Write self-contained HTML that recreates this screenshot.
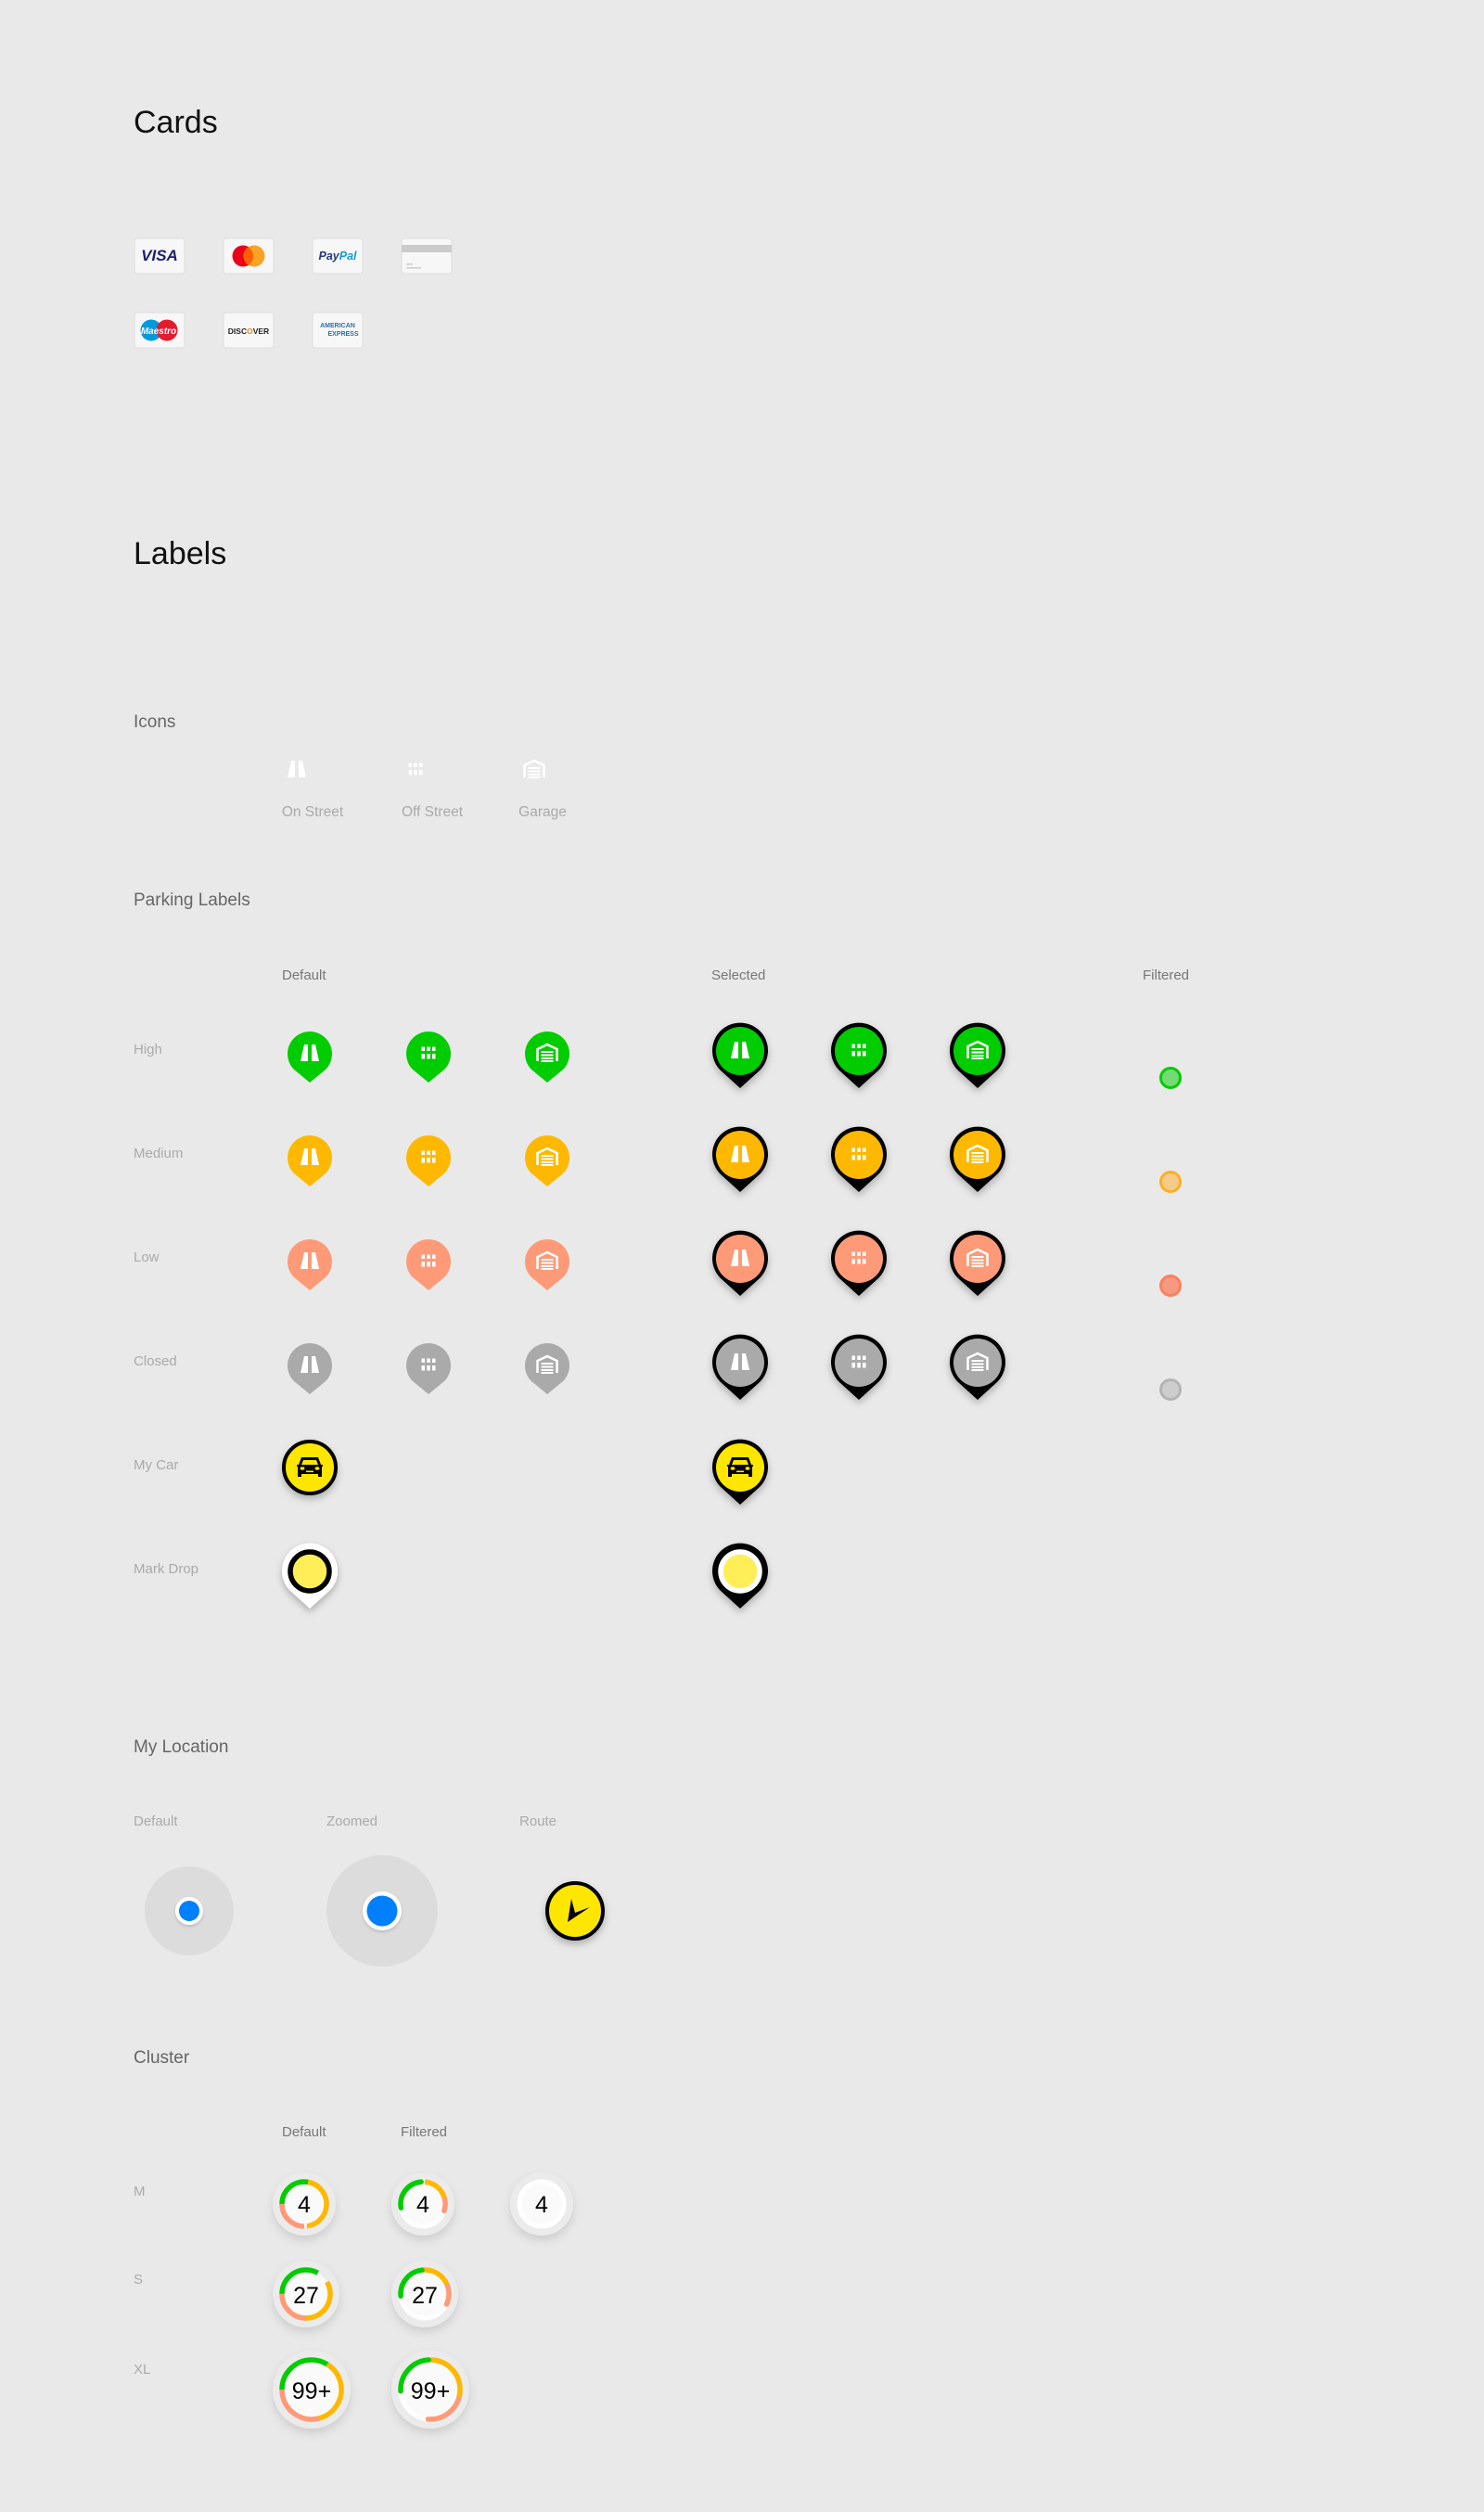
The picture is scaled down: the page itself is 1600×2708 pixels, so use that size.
<!DOCTYPE html>
<html><head><meta charset="utf-8"><style>
html,body{margin:0;padding:0;background:#e9e9e9;}
svg{display:block;font-family:"Liberation Sans",Arial,sans-serif;}
</style></head><body>
<svg width="1600" height="2708" viewBox="0 0 1600 2708" xmlns="http://www.w3.org/2000/svg">
<defs>
<filter id="sh" x="-50%" y="-50%" width="200%" height="200%"><feDropShadow dx="0" dy="4" stdDeviation="4" flood-color="#000" flood-opacity="0.25"/></filter>
<filter id="sh2" x="-50%" y="-50%" width="200%" height="200%"><feDropShadow dx="0" dy="2" stdDeviation="1.5" flood-color="#000" flood-opacity="0.15"/></filter>
<filter id="sh3" x="-50%" y="-50%" width="200%" height="200%"><feDropShadow dx="0" dy="5" stdDeviation="5" flood-color="#000" flood-opacity="0.12"/></filter>
<g id="ion"><path d="M-10,8 L-6,-10 L-2,-10 L-2,8 Z M2,-10 L6,-10 L10,8 L2,8 Z" fill="#fff"/></g>
<g id="ioff" fill="#fff"><rect x="-7.5" y="-7.5" width="3.5" height="4.5"/><rect x="-1.7" y="-7.5" width="3.5" height="4.5"/><rect x="4" y="-7.5" width="3.5" height="4.5"/><rect x="-7.5" y="0" width="3.5" height="5.5"/><rect x="-1.7" y="0" width="3.5" height="5.5"/><rect x="4" y="0" width="3.5" height="5.5"/></g>
<g id="igar" fill="none" stroke="#fff"><path d="M-10.5,8 L-10.5,-5 L0,-10 L10.5,-5 L10.5,8" stroke-width="2.5"/><path d="M-6.5,-2 H6.5 M-6.5,1.5 H6.5 M-6.5,5 H6.5 M-6.5,8 H6.5" stroke-width="2"/></g>
<path id="pd" d="M0,31 L-17,17 A24,24 0 1 1 17,17 Z"/>
<path id="ps" d="M0,40 L-21,21 A30,30 0 1 1 21,21 Z"/>
<g id="car"><path d="M-9,-11 L9,-11 L12,-3 L14,-3 L14,-1 L13,-1 L13,10 L9,10 L9,7 L-9,7 L-9,10 L-13,10 L-13,-1 L-14,-1 L-14,-3 L-12,-3 Z" fill="#000"/><path d="M-7,-8 L7,-8 L9,-3 L-9,-3 Z" fill="#ffe600"/><ellipse cx="-8" cy="1" rx="2.5" ry="1.8" fill="#ffe600"/><ellipse cx="8" cy="1" rx="2.5" ry="1.8" fill="#ffe600"/><rect x="-4" y="3.5" width="8" height="1.6" fill="#ffe600"/></g>
</defs>

<text x="144" y="143" font-size="34" fill="#111">Cards</text>
<text x="144" y="608" font-size="34" fill="#111">Labels</text>

<g stroke="#dedede" stroke-width="1" fill="#f7f7f7">
<rect x="145" y="257" width="54" height="38" rx="3"/><rect x="241" y="257" width="54" height="38" rx="3"/><rect x="337" y="257" width="54" height="38" rx="3"/><rect x="433" y="257" width="54" height="38" rx="3"/>
<rect x="145" y="337" width="54" height="38" rx="3"/><rect x="241" y="337" width="54" height="38" rx="3"/><rect x="337" y="337" width="54" height="38" rx="3"/>
</g>
<text x="172" y="281" font-size="17" font-weight="bold" font-style="italic" fill="#1a1f71" text-anchor="middle">VISA</text>
<circle cx="262" cy="276" r="11.5" fill="#eb001b"/><circle cx="274" cy="276" r="11.5" fill="#f79e1b" fill-opacity="0.95"/>
<path d="M268,266.5 A11.5,11.5 0 0 1 268,285.5 A11.5,11.5 0 0 1 268,266.5Z" fill="#ff5f00"/>
<text x="364" y="280" font-size="12.5" font-weight="bold" font-style="italic" text-anchor="middle"><tspan fill="#253b80">Pay</tspan><tspan fill="#179bd7">Pal</tspan></text>
<rect x="433" y="264" width="54" height="8" fill="#cbcbcb"/>
<rect x="438" y="284" width="7" height="1.5" fill="#ccc"/><rect x="438" y="288" width="16" height="1.5" fill="#ccc"/>
<circle cx="163" cy="356" r="11.5" fill="#0099df"/><circle cx="180" cy="356" r="11.5" fill="#e41b2c"/>
<text x="171" y="360" font-size="10" font-weight="bold" font-style="italic" fill="#fff" text-anchor="middle">Maestro</text>
<text x="268" y="360" font-size="8.5" font-weight="bold" fill="#222" text-anchor="middle">DISC<tspan fill="#f58220">O</tspan>VER</text>
<text x="364" y="353" font-size="7" font-weight="bold" fill="#2671b9" text-anchor="middle">AMERICAN</text>
<text x="370" y="362" font-size="7" font-weight="bold" fill="#2671b9" text-anchor="middle">EXPRESS</text>

<text x="144" y="784" font-size="19" fill="#666">Icons</text>
<use href="#ion" x="320" y="830"/><use href="#ioff" x="448" y="830"/><use href="#igar" x="576" y="830"/>
<g font-size="15.5" fill="#aaa" text-anchor="middle"><text x="337" y="880">On Street</text><text x="466" y="880">Off Street</text><text x="585" y="880">Garage</text></g>

<text x="144" y="976" font-size="19" fill="#666">Parking Labels</text>
<g font-size="15" fill="#777"><text x="304" y="1056">Default</text><text x="767" y="1056">Selected</text><text x="1232" y="1056">Filtered</text></g>
<g font-size="15" fill="#aaa"><text x="144" y="1136">High</text><text x="144" y="1248">Medium</text><text x="144" y="1360">Low</text><text x="144" y="1472">Closed</text><text x="144" y="1584">My Car</text><text x="144" y="1696">Mark Drop</text></g>

<g fill="#00cc00"><use href="#pd" x="334" y="1136"/><use href="#pd" x="462" y="1136"/><use href="#pd" x="590" y="1136"/></g>
<g fill="#ffb800"><use href="#pd" x="334" y="1248"/><use href="#pd" x="462" y="1248"/><use href="#pd" x="590" y="1248"/></g>
<g fill="#ff9a78"><use href="#pd" x="334" y="1360"/><use href="#pd" x="462" y="1360"/><use href="#pd" x="590" y="1360"/></g>
<g fill="#aaaaaa"><use href="#pd" x="334" y="1472"/><use href="#pd" x="462" y="1472"/><use href="#pd" x="590" y="1472"/></g>
<g>
<use href="#ion" x="334" y="1136"/><use href="#ioff" x="462" y="1136"/><use href="#igar" x="590" y="1136"/>
<use href="#ion" x="334" y="1248"/><use href="#ioff" x="462" y="1248"/><use href="#igar" x="590" y="1248"/>
<use href="#ion" x="334" y="1360"/><use href="#ioff" x="462" y="1360"/><use href="#igar" x="590" y="1360"/>
<use href="#ion" x="334" y="1472"/><use href="#ioff" x="462" y="1472"/><use href="#igar" x="590" y="1472"/>
</g>

<g filter="url(#sh)" fill="#000">
<use href="#ps" x="798" y="1133"/><use href="#ps" x="926" y="1133"/><use href="#ps" x="1054" y="1133"/>
<use href="#ps" x="798" y="1245"/><use href="#ps" x="926" y="1245"/><use href="#ps" x="1054" y="1245"/>
<use href="#ps" x="798" y="1357"/><use href="#ps" x="926" y="1357"/><use href="#ps" x="1054" y="1357"/>
<use href="#ps" x="798" y="1469"/><use href="#ps" x="926" y="1469"/><use href="#ps" x="1054" y="1469"/>
<use href="#ps" x="798" y="1582"/><use href="#ps" x="798" y="1694"/>
</g>
<g fill="#00cc00"><circle cx="798" cy="1133" r="26"/><circle cx="926" cy="1133" r="26"/><circle cx="1054" cy="1133" r="26"/></g>
<g fill="#ffb800"><circle cx="798" cy="1245" r="26"/><circle cx="926" cy="1245" r="26"/><circle cx="1054" cy="1245" r="26"/></g>
<g fill="#ff9a78"><circle cx="798" cy="1357" r="26"/><circle cx="926" cy="1357" r="26"/><circle cx="1054" cy="1357" r="26"/></g>
<g fill="#aaaaaa"><circle cx="798" cy="1469" r="26"/><circle cx="926" cy="1469" r="26"/><circle cx="1054" cy="1469" r="26"/></g>
<g>
<use href="#ion" x="798" y="1133"/><use href="#ioff" x="926" y="1133"/><use href="#igar" x="1054" y="1133"/>
<use href="#ion" x="798" y="1245"/><use href="#ioff" x="926" y="1245"/><use href="#igar" x="1054" y="1245"/>
<use href="#ion" x="798" y="1357"/><use href="#ioff" x="926" y="1357"/><use href="#igar" x="1054" y="1357"/>
<use href="#ion" x="798" y="1469"/><use href="#ioff" x="926" y="1469"/><use href="#igar" x="1054" y="1469"/>
</g>

<circle cx="1262" cy="1162" r="10.5" fill="#72db72" stroke="#00cc00" stroke-width="3"/>
<circle cx="1262" cy="1274" r="10.5" fill="#f5cb8a" stroke="#ffb020" stroke-width="3"/>
<circle cx="1262" cy="1386" r="10.5" fill="#f59a80" stroke="#ff7f5e" stroke-width="3"/>
<circle cx="1262" cy="1498" r="10.5" fill="#cdcdcd" stroke="#b4b4b4" stroke-width="3"/>

<circle cx="334" cy="1582" r="28" fill="#ffe600" stroke="#000" stroke-width="4" filter="url(#sh)"/>
<use href="#car" x="334" y="1582"/>
<circle cx="798" cy="1582" r="26" fill="#ffe600"/>
<use href="#car" x="798" y="1582"/>

<use href="#ps" x="334" y="1694" fill="#fff" filter="url(#sh)"/>
<circle cx="334" cy="1694" r="21" fill="#ffee58" stroke="#000" stroke-width="5.5"/>
<circle cx="798" cy="1694" r="21" fill="#ffee58" stroke="#fff" stroke-width="5.5"/>

<text x="144" y="1889" font-size="19" fill="#666">My Location</text>
<g font-size="15" fill="#aaa"><text x="144" y="1968">Default</text><text x="352" y="1968">Zoomed</text><text x="560" y="1968">Route</text></g>
<circle cx="204" cy="2060" r="48" fill="#dcdcdc"/>
<circle cx="204" cy="2060" r="15" fill="#fff" filter="url(#sh2)"/><circle cx="204" cy="2060" r="11" fill="#007fff"/>
<circle cx="412" cy="2060" r="60" fill="#dcdcdc"/>
<circle cx="412" cy="2060" r="21" fill="#fff" filter="url(#sh2)"/><circle cx="412" cy="2060" r="16.5" fill="#007fff"/>
<circle cx="620" cy="2060" r="30" fill="#ffe600" stroke="#000" stroke-width="4" filter="url(#sh)"/>
<path d="M616,2047 L620,2062 L636,2056 L612,2072 Z" fill="#000"/>

<text x="144" y="2224" font-size="19" fill="#666">Cluster</text>
<g font-size="15" fill="#777"><text x="304" y="2303">Default</text><text x="432" y="2303">Filtered</text></g>
<g font-size="15" fill="#aaa"><text x="144" y="2367">M</text><text x="144" y="2462">S</text><text x="144" y="2559">XL</text></g>

<g filter="url(#sh3)" fill="#ebebeb">
<circle cx="328" cy="2376" r="34"/><circle cx="456" cy="2376" r="34"/><circle cx="584" cy="2376" r="34"/>
<circle cx="330" cy="2473" r="36"/><circle cx="458" cy="2473" r="36"/>
<circle cx="336" cy="2576" r="42"/><circle cx="464" cy="2576" r="42"/>
</g>
<g fill="#fafafa">
<circle cx="328" cy="2376" r="24"/><circle cx="456" cy="2376" r="24"/><circle cx="584" cy="2376" r="24"/>
<circle cx="330" cy="2473" r="26"/><circle cx="458" cy="2473" r="26"/>
<circle cx="336" cy="2576" r="32"/><circle cx="464" cy="2576" r="32"/>
</g>
<g fill="none" stroke-width="5.5">
<circle cx="328" cy="2376" r="24" stroke="#00cc00" stroke-dasharray="41.9 200" transform="rotate(180 328 2376)"/>
<circle cx="328" cy="2376" r="24" stroke="#ffb800" stroke-dasharray="68.1 200" transform="rotate(280 328 2376)"/>
<circle cx="328" cy="2376" r="24" stroke="#ff9a78" stroke-dasharray="37.7 200" transform="rotate(90 328 2376)"/>
<circle cx="456" cy="2376" r="24" stroke="#fff" stroke-width="5"/>
<circle cx="456" cy="2376" r="24" stroke="#ff9a78" stroke-linecap="round" stroke-dasharray="20 200" transform="rotate(-30 456 2376)"/>
<circle cx="456" cy="2376" r="24" stroke="#ffb800" stroke-dasharray="29 200" transform="rotate(275 456 2376)"/>
<circle cx="456" cy="2376" r="24" stroke="#00cc00" stroke-linecap="round" stroke-dasharray="40 200" transform="rotate(170 456 2376)"/>
<circle cx="584" cy="2376" r="24" stroke="#fff" stroke-width="5"/>
<circle cx="330" cy="2473" r="26" stroke="#00cc00" stroke-dasharray="54 200" transform="rotate(180 330 2473)"/>
<circle cx="330" cy="2473" r="26" stroke="#ffb800" stroke-dasharray="68 200" transform="rotate(330 330 2473)"/>
<circle cx="330" cy="2473" r="26" stroke="#ff9a78" stroke-dasharray="41 200" transform="rotate(90 330 2473)"/>
<circle cx="458" cy="2473" r="26" stroke="#fff" stroke-width="5"/>
<circle cx="458" cy="2473" r="26" stroke="#ff9a78" stroke-linecap="round" stroke-dasharray="25 200" transform="rotate(-30 458 2473)"/>
<circle cx="458" cy="2473" r="26" stroke="#ffb800" stroke-dasharray="32 200" transform="rotate(265 458 2473)"/>
<circle cx="458" cy="2473" r="26" stroke="#00cc00" stroke-linecap="round" stroke-dasharray="40 200" transform="rotate(175 458 2473)"/>
<circle cx="336" cy="2576" r="32" stroke="#00cc00" stroke-dasharray="68 300" transform="rotate(180 336 2576)"/>
<circle cx="336" cy="2576" r="32" stroke="#ffb800" stroke-dasharray="75 300" transform="rotate(302 336 2576)"/>
<circle cx="336" cy="2576" r="32" stroke="#ff9a78" stroke-dasharray="58 300" transform="rotate(76 336 2576)"/>
<circle cx="464" cy="2576" r="32" stroke="#fff" stroke-width="5"/>
<circle cx="464" cy="2576" r="32" stroke="#ff9a78" stroke-linecap="round" stroke-dasharray="50 300" transform="rotate(5 464 2576)"/>
<circle cx="464" cy="2576" r="32" stroke="#ffb800" stroke-dasharray="58 300" transform="rotate(270 464 2576)"/>
<circle cx="464" cy="2576" r="32" stroke="#00cc00" stroke-linecap="round" stroke-dasharray="50 300" transform="rotate(177 464 2576)"/>
</g>
<g font-size="25" fill="#000" text-anchor="middle" font-weight="500">
<text x="328" y="2385">4</text><text x="456" y="2385">4</text><text x="584" y="2385">4</text>
<text x="330" y="2483">27</text><text x="458" y="2483">27</text>
<text x="336" y="2586">99+</text><text x="464" y="2586">99+</text>
</g>
</svg>
</body></html>
